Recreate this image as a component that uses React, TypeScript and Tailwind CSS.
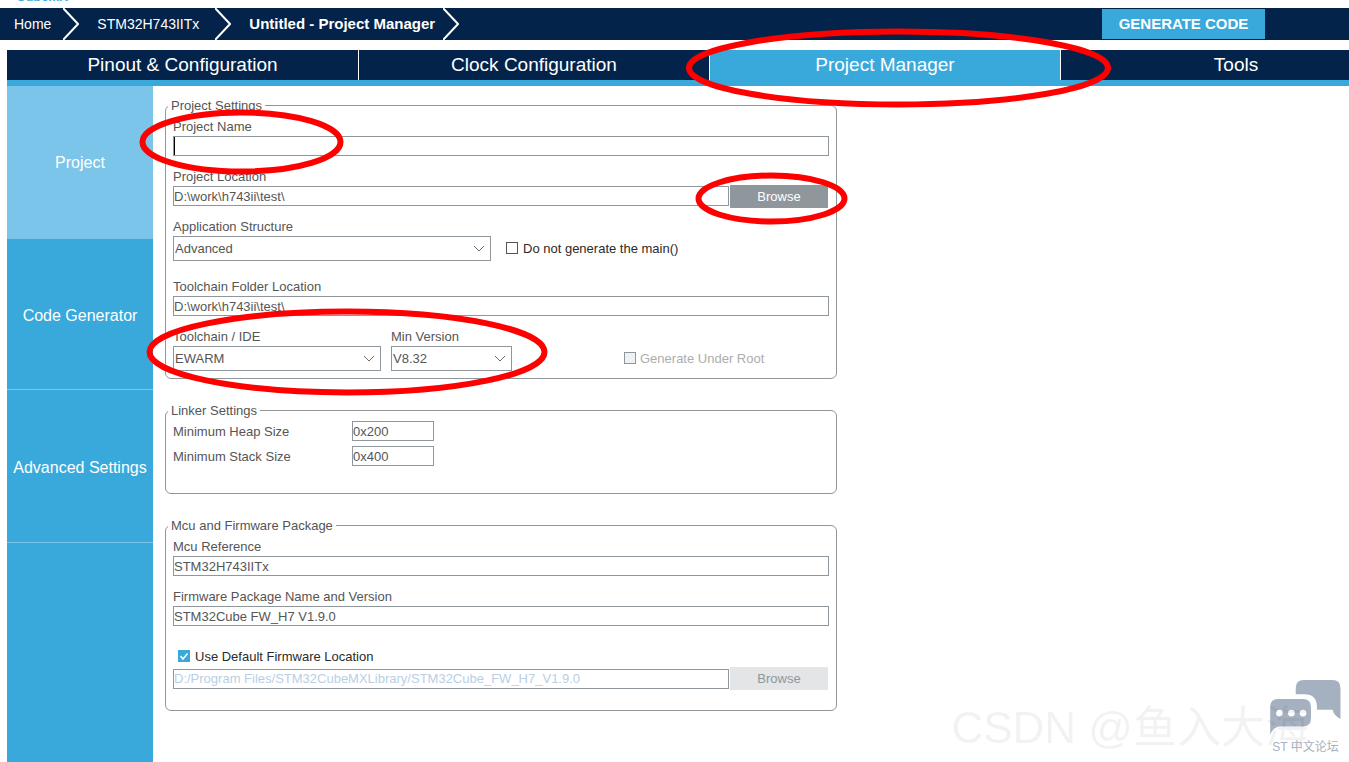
import { type ReactNode, useId } from "react";

const tabs = ["Pinout & Configuration", "Clock Configuration", "Project Manager", "Tools"];

function Crumb() {
  return (
    <svg className="h-8 w-4 shrink-0" viewBox="0 0 16 32" fill="none" stroke="white" strokeWidth="2" aria-hidden="true">
      <path d="M0 0L15 16L0 32" />
    </svg>
  );
}

function Panel({ title, children }: { title: string; children: ReactNode }) {
  return (
    <fieldset className="w-full max-w-[672px] rounded-md border border-[#8f969c]">
      <legend className="ml-0.5 h-4 px-[3px] leading-[18px]">{title}</legend>
      <div className="px-[7px] pt-[3px]">{children}</div>
    </fieldset>
  );
}

function TextField({ label, value, caret }: { label: string; value: string; caret?: boolean }) {
  const id = useId();
  return (
    <div className="relative flex flex-col">
      <label htmlFor={id} className="h-5 self-start leading-[22px]">{label}</label>
      <input id={id} type="text" defaultValue={value} className="h-5 w-full border border-[#8f969c] bg-white pt-0.5" />
      {caret && <span className="absolute bottom-px left-px h-[18px] w-px bg-black" />}
    </div>
  );
}

function SelectField({ label, value, width }: { label: string; value: string; width: string }) {
  const id = useId();
  return (
    <div className={width}>
      <label htmlFor={id} className="block h-5 leading-[22px]">{label}</label>
      <div className="relative">
        <select id={id} defaultValue={value} className="block h-[25px] w-full appearance-none border border-[#8f969c] bg-white pl-px">
          <option>{value}</option>
        </select>
        <svg className="pointer-events-none absolute top-2 right-1.5 h-2 w-3" viewBox="0 0 12 8" fill="none" stroke="#6b6b6b" aria-hidden="true">
          <path d="M1 2L6 7L11 2" />
        </svg>
      </div>
    </div>
  );
}

function Check({ label, checked, disabled }: { label: string; checked?: boolean; disabled?: boolean }) {
  return (
    <label className={disabled ? "flex items-center gap-1 text-[#adadad]" : "flex items-center gap-[5px] text-[#2b2b2b]"}>
      <span className="relative flex">
        <input
          type="checkbox"
          defaultChecked={checked}
          disabled={disabled}
          className="peer size-3 appearance-none border border-[#555] bg-white checked:border-[#39a9dc] checked:bg-[#39a9dc] disabled:border-[#8f969c] disabled:bg-[#eff1f4]"
        />
        <svg className="pointer-events-none absolute inset-0 hidden size-3 peer-checked:block" viewBox="0 0 12 12" fill="none" stroke="white" strokeWidth="1.5" aria-hidden="true">
          <path d="M2.5 6L5 9L9.5 3.5" />
        </svg>
      </span>
      <span className="h-5 leading-[22px]">{label}</span>
    </label>
  );
}

function SizeRow({ label, value }: { label: string; value: string }) {
  const id = useId();
  return (
    <div className="flex">
      <label htmlFor={id} className="h-5 w-[179px] leading-[22px]">{label}</label>
      <input id={id} type="text" defaultValue={value} className="h-5 w-[82px] border border-[#8f969c] bg-white pt-0.5" />
    </div>
  );
}

function ForumMark() {
  return (
    <div className="flex flex-col items-center text-[12px] leading-4 text-[#a6b2c1]">
      <svg className="h-[55px] w-[71px]" viewBox="0 0 213 166" fill="#a5b1c0" aria-hidden="true">
        <path d="M77 43V24Q77 0 101 0H188Q212 0 212 24V118Q193 108 188 90H141V81Q141 43 103 43Z" />
        <path d="M24 57H99Q123 57 123 81V116Q123 140 99 140H26Q7 144 0 166V81Q0 57 24 57Z" />
        <circle cx="28" cy="100" r="10" fill="white" />
        <circle cx="64" cy="100" r="10" fill="white" />
        <circle cx="99" cy="100" r="10" fill="white" />
      </svg>
      <span className="mt-1 whitespace-nowrap">ST 中文论坛</span>
    </div>
  );
}

export default function App() {
  return (
    <div className="relative flex min-h-screen flex-col overflow-hidden bg-white font-['Liberation_Sans','Noto_Sans_CJK_SC',sans-serif] text-[13px] leading-5 text-[#555]">
      <div className="flex h-2 items-end overflow-hidden pb-[5px] pl-4">
        <span className="text-[13px] leading-3 font-bold text-[#39a9dc]">CubeMX</span>
      </div>

      <header className="flex h-8 items-center bg-[#03234b] text-white">
        <nav className="flex items-center whitespace-nowrap">
          <a href="#home" className="pr-3 pl-3.5 text-[14px]">Home</a>
          <Crumb />
          <a href="#device" className="pr-4 pl-[18px] text-[14px]">STM32H743IITx</a>
          <Crumb />
          <a href="#project" className="pr-2 pl-[18px] text-[15px] font-bold">Untitled - Project Manager</a>
          <Crumb />
        </nav>
        <button type="button" className="mr-[84px] ml-auto h-[30px] min-w-[163px] bg-[#39a9dc] px-4 text-[15px] font-bold">GENERATE CODE</button>
      </header>

      <nav className="mt-2.5 ml-[7px] flex border-b-[6px] border-[#39a9dc] bg-[#03234b] text-[19px] text-white">
        {tabs.map((tab) => (
          <button
            key={tab}
            type="button"
            className={`h-[30px] min-w-[351px] flex-1 border-l border-white first:border-l-0 ${tab === "Project Manager" ? "bg-[#39a9dc]" : ""}`}
          >
            {tab}
          </button>
        ))}
      </nav>

      <div className="ml-[7px] flex flex-1">
        <aside className="flex w-[146px] shrink-0 flex-col bg-[#39a9dc] text-[16px] text-white">
          <button type="button" className="h-[153px] bg-[#7ac5e9]">Project</button>
          <button type="button" className="h-[151px] border-b border-[#7ac5e9] pt-1">Code Generator</button>
          <button type="button" className="h-[153px] border-b border-[#7ac5e9] pt-1 whitespace-nowrap">Advanced Settings</button>
        </aside>

        <main className="flex min-w-0 flex-1 flex-col gap-[23px] px-3 pt-[11px]">
          <Panel title="Project Settings">
            <div className="flex flex-col gap-2.5 pb-[7px]">
              <TextField label="Project Name" value="" caret />
              <div className="flex items-end gap-px">
                <div className="flex-1">
                  <TextField label="Project Location" value="D:\work\h743ii\test\" />
                </div>
                <button type="button" className="-my-0.5 mr-px h-[23px] w-[98px] bg-[#8f979d] text-white">Browse</button>
              </div>
              <div className="flex items-end gap-[15px]">
                <SelectField label="Application Structure" value="Advanced" width="w-[318px]" />
                <div className="pb-[3px]">
                  <Check label="Do not generate the main()" />
                </div>
              </div>
              <div className="pt-[5px]">
                <TextField label="Toolchain Folder Location" value="D:\work\h743ii\test\" />
              </div>
              <div className="flex items-end gap-2.5">
                <SelectField label="Toolchain / IDE" value="EWARM" width="w-[208px]" />
                <SelectField label="Min Version" value="V8.32" width="w-[121px]" />
                <div className="pb-[3px] pl-[102px]">
                  <Check label="Generate Under Root" disabled />
                </div>
              </div>
            </div>
          </Panel>

          <Panel title="Linker Settings">
            <div className="flex flex-col gap-[5px] pb-[27px]">
              <SizeRow label="Minimum Heap Size" value="0x200" />
              <SizeRow label="Minimum Stack Size" value="0x400" />
            </div>
          </Panel>

          <Panel title="Mcu and Firmware Package">
            <div className="flex flex-col gap-2.5 pb-[22px]">
              <TextField label="Mcu Reference" value="STM32H743IITx" />
              <TextField label="Firmware Package Name and Version" value="STM32Cube FW_H7 V1.9.0" />
              <div className="pt-2.5">
                <div className="pb-[3px] pl-[5px]">
                  <Check label="Use Default Firmware Location" checked />
                </div>
                <div className="-my-px flex items-center gap-px">
                  <input
                    type="text"
                    aria-label="Firmware location"
                    disabled
                    defaultValue="D:/Program Files/STM32CubeMXLibrary/STM32Cube_FW_H7_V1.9.0"
                    className="h-5 min-w-0 flex-1 border border-[#8f969c] bg-white text-[#b8cfe5]"
                  />
                  <button type="button" disabled className="-my-px mr-px h-[23px] w-[98px] bg-[#e3e5e7] text-[#8f979d]">Browse</button>
                </div>
              </div>
            </div>
          </Panel>
        </main>
      </div>

      <div className="absolute right-2 bottom-[7px]">
        <ForumMark />
      </div>
      <p className="pointer-events-none absolute right-10 bottom-2 text-[44px] leading-[52px] whitespace-nowrap text-black/5 drop-shadow-[1px_1px_0_rgba(0,0,0,0.04)]">
        CSDN @鱼入大海
      </p>

      {/* red pen marks */}
      <svg className="pointer-events-none absolute top-0 left-0 h-[400px] w-[1120px]" viewBox="0 0 1120 400" fill="none" stroke="#ff0000" strokeWidth="6" aria-hidden="true">
        <ellipse cx="898.5" cy="68" rx="209.5" ry="36.5" />
        <ellipse cx="241.5" cy="142" rx="99" ry="29.5" />
        <ellipse cx="771.5" cy="198.5" rx="73" ry="23" />
        <ellipse cx="347" cy="352" rx="197.5" ry="40.5" />
      </svg>
    </div>
  );
}
